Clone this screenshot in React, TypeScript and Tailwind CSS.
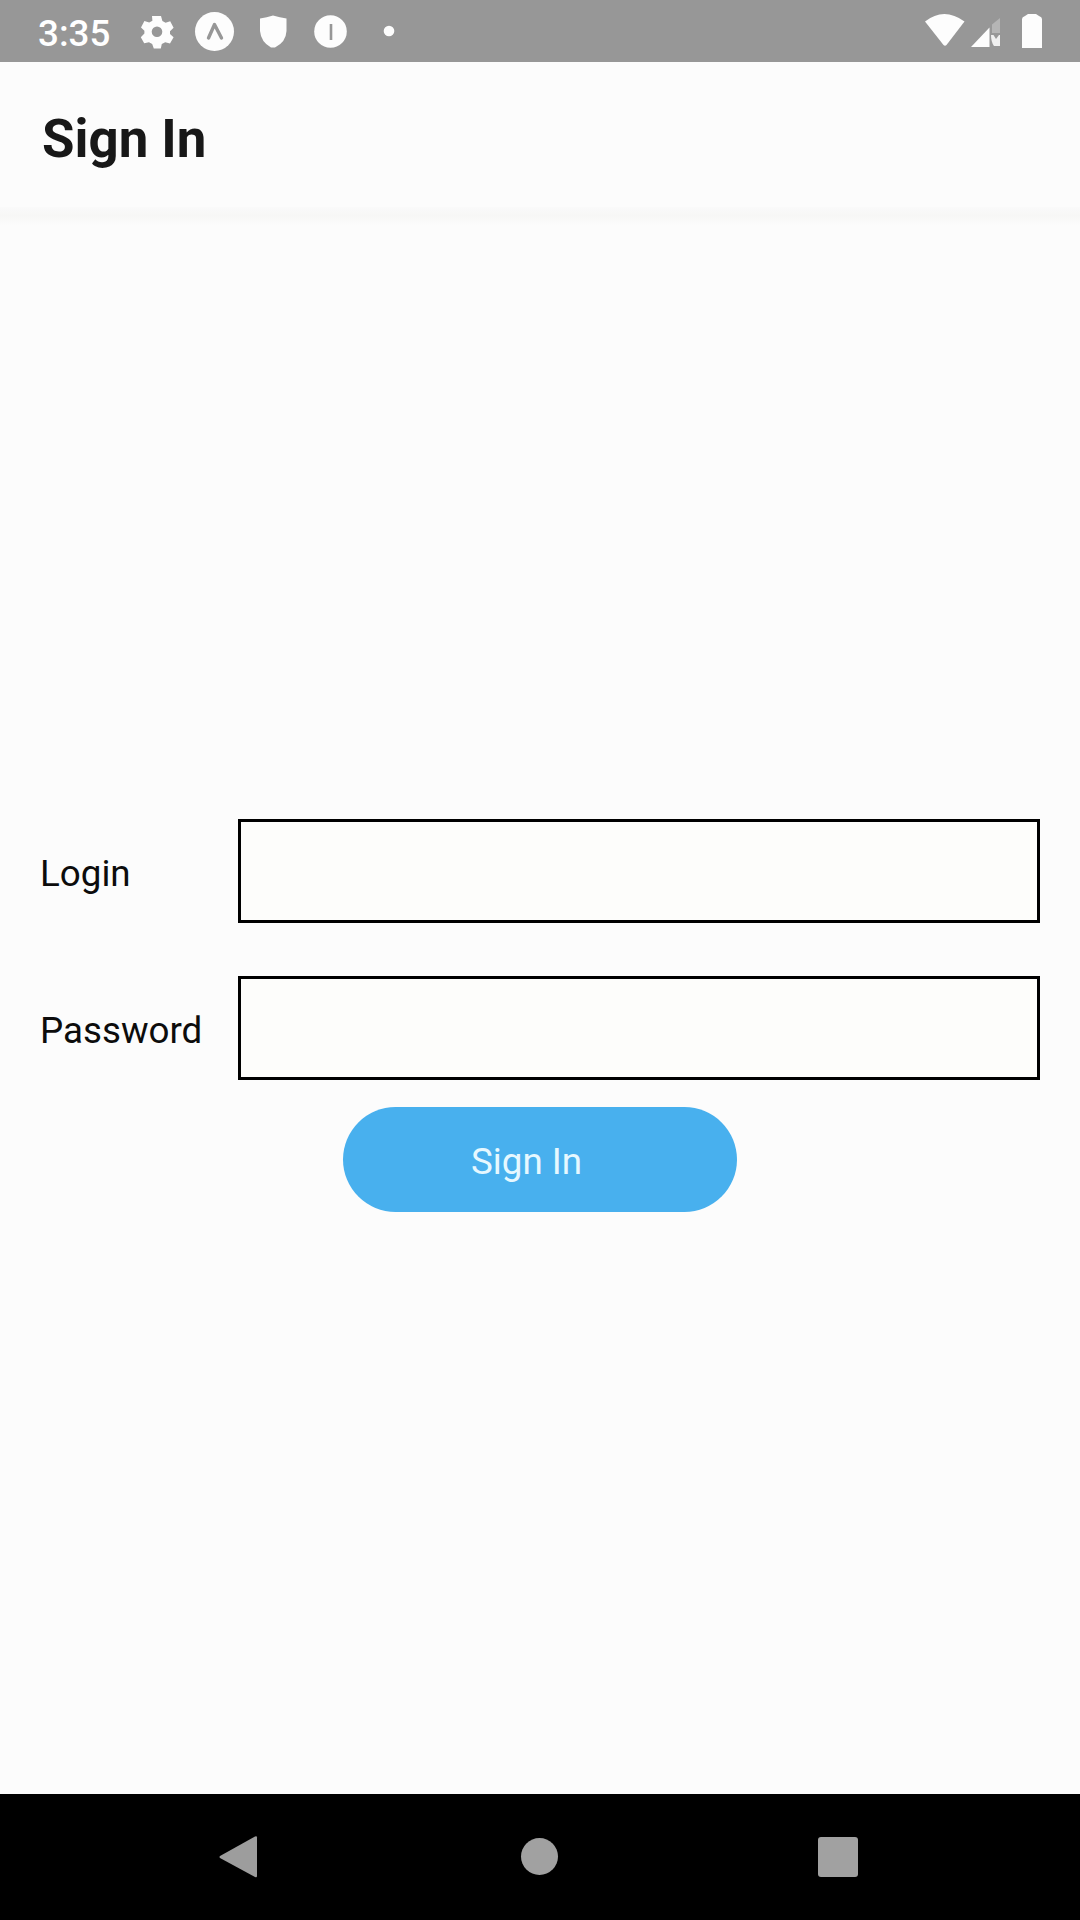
import React from "react";

function StatusBar() {
  return (
    <header className="flex h-[62px] w-full items-center bg-[#979797] text-white">
      <span className="ml-[38px] w-[102px] pt-[5px] text-[36.750px] leading-[57px] font-medium">3:35</span>
      <svg className="h-[62px] w-[270px]" viewBox="140 0 270 62" fill="#fdfdfd" aria-hidden="true">
        <path
          fillRule="evenodd"
          d="M152 16h9l1.400 5 3.200 1.800 4.600-1.600 3.400 6.600-3.600 3.400v2.800l3.600 3.200-3.600 6.200-4.800-1.200-3.400 1.800-1 4.400h-7l-1.600-4.400-3.200-1.800-4.800 1-3.400-6 3.600-3.600v-2.800l-3.400-3.400 3.400-6.400 4.800 1.600 3.200-1.800zM157 26.500a5.300 5.300 0 1 0 0 10.600a5.300 5.300 0 1 0 0-10.600z"
        />
        <circle cx="214.500" cy="31.500" r="19.500" />
        <path d="M208.500 38L214.500 24.500L221.500 38" fill="none" stroke="#979797" strokeWidth="3.400" strokeLinecap="round" strokeLinejoin="round" />
        <path d="M260 18.500Q267 17.500 273 15.500Q280 17.500 286.500 18.500V31Q286 42 275 47.500H271Q261 42 260 31z" />
        <circle cx="330.500" cy="31.500" r="16.300" />
        <path d="M331 24V40" stroke="#979797" strokeWidth="2.600" />
        <circle cx="389" cy="31" r="5.300" />
      </svg>
      <svg className="ml-auto h-[62px] w-[180px]" viewBox="900 0 180 62" fill="#fdfdfd" aria-hidden="true">
        <path d="M925 21.500Q944 6.500 964.500 21.500L946.500 45Q945 46.500 943.500 45z" />
        <path d="M971 47L989.500 27.500V47z" />
        <path d="M992 24.500L1000 18V33h-8z" fill="#b5b5b5" />
        <path d="M991 35l2.500 0 2.500 4 3-4h1V46h-6q-3-4-3-11z" fill="#efefef" />
        <path d="M1022 19q0-2 3-3l3-2h8l3 2q3 1 3 3v29h-20z" />
      </svg>
    </header>
  );
}

function Field({ label, type }: { label: string; type: string }) {
  return (
    <label className="flex h-[104px] items-center pr-10 pl-10">
      <span className="w-[198px] pt-[6px] text-[36.750px] leading-none text-[#0c0c0c]">{label}</span>
      <input type={type} className="h-full min-w-0 flex-1 border-[3px] border-black bg-[#fdfdfb] px-4 text-4xl outline-none" />
    </label>
  );
}

function NavigationBar() {
  return (
    <nav className="flex h-[126px] items-center bg-black">
      <button aria-label="Back" className="ml-[219px]">
        <svg width="39" height="44" viewBox="0 0 39 44" className="block" aria-hidden="true">
          <path d="M1 21L36 1.500Q38 .5 38 2.500V41Q38 43 36 42L1 23Q0 22 1 21z" fill="#9d9d9d" />
        </svg>
      </button>
      <button aria-label="Home" className="mb-[2px] ml-[263px] size-[37px] rounded-full bg-[#a1a1a1]" />
      <button aria-label="Recent apps" className="ml-[260px] size-10 rounded-[3px] bg-[#a1a1a1]" />
    </nav>
  );
}

export default function App() {
  return (
    <div className="flex h-[1920px] w-[1080px] flex-col overflow-hidden bg-[#fcfcfc] font-[Roboto,sans-serif]">
      <StatusBar />
      <div className="flex h-[145px] items-center pl-[42px]">
        <h1 className="pt-[9px] text-[52.800px] leading-[62px] font-bold text-[#181818]">Sign In</h1>
      </div>
      <div className="h-[18px] bg-linear-to-b from-[#fafafa] via-[#f7f7f6] to-[#fcfcfc]" />
      <main className="flex flex-1 flex-col pt-[594px]">
        <Field label="Login" type="text" />
        <div className="h-[53px]" />
        <Field label="Password" type="password" />
        <button className="mt-[27px] ml-[343px] flex h-[105px] w-[394px] items-center rounded-full bg-[#48b0ee] pt-[5px] pl-[128px] text-[36.750px] text-[#e6f8ff]">
          Sign In
        </button>
      </main>
      <NavigationBar />
    </div>
  );
}
